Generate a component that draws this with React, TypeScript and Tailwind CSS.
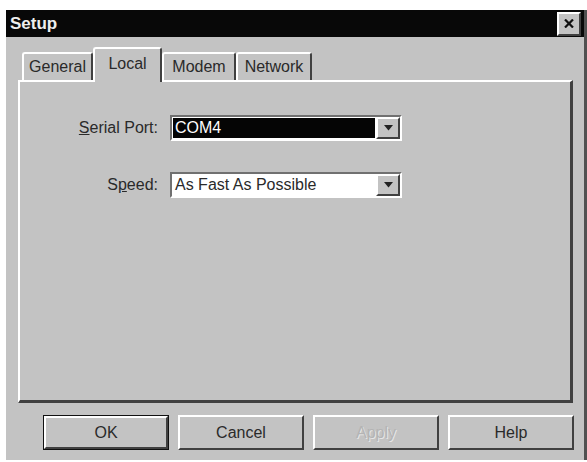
import React from "react";

const raised =
  "border-t-2 border-l-2 border-t-white border-l-white border-r-2 border-b-2 border-r-[#404040] border-b-[#404040]";

function Tab({ label, width, active }: { label: string; width: number; active?: boolean }) {
  return (
    <div
      className={
        active
          ? "relative z-10 -mb-[2px] flex h-[35px] items-start justify-center rounded-t-[3px] border-t-2 border-l-2 border-r-2 border-t-white border-l-white border-r-[#404040] bg-[#c3c3c3] pt-[6px]"
          : "mt-[5px] flex h-[28px] items-start justify-center rounded-t-[3px] border-t-2 border-l-2 border-r-2 border-t-white border-l-white border-r-[#404040] bg-[#c3c3c3] pt-[4px]"
      }
      style={{ width }}
    >
      <span className="leading-[18px]">{label}</span>
    </div>
  );
}

function Combo({ value, selected }: { value: string; selected?: boolean }) {
  return (
    <div className="flex h-[26px] w-[232px] border-t-2 border-l-2 border-t-[#707070] border-l-[#707070] border-r-2 border-b-2 border-r-white border-b-white bg-white">
      <div className="flex flex-1 items-center p-[1px]">
        <div
          className={
            selected
              ? "flex h-full w-full items-center bg-[#050505] pl-[2px] text-white"
              : "flex h-full w-full items-center pl-[2px] text-[#2a2a2a]"
          }
        >
          {value}
        </div>
      </div>
      <div className={"flex w-[24px] items-center justify-center bg-[#c3c3c3] " + raised}>
        <svg width="9" height="6" viewBox="0 0 9 6">
          <path d="M0 0h9L4.5 5.5z" fill="#222" />
        </svg>
      </div>
    </div>
  );
}

function Btn({ label, def, disabled }: { label: string; def?: boolean; disabled?: boolean }) {
  return (
    <div className={"h-[35px] w-[126px] " + (def ? "border border-[#111]" : "")}>
      <div className={"flex h-full w-full items-center justify-center bg-[#c3c3c3] " + raised}>
        <span
          className={disabled ? "text-[#b4b4b4]" : "text-[#2a2a2a]"}
          style={disabled ? { textShadow: "1px 1px 0 #e6e6e6" } : undefined}
        >
          {label}
        </span>
      </div>
    </div>
  );
}

export default function App() {
  return (
    <div
      className="h-[462px] w-[587px] overflow-hidden bg-white text-[16px] text-[#2a2a2a]"
      style={{ fontFamily: '"Liberation Sans", Arial, sans-serif' }}
    >
      <div className="ml-[6px] mt-[10px] flex h-[450px] w-[581px] flex-col border-r-[3px] border-[#505050] bg-[#c3c3c3]">
        <div className="flex h-[27px] items-center justify-between bg-[#080808] pl-[4px] pr-[3px]">
          <span className="text-[17px] font-bold text-[#eeeeee]">Setup</span>
          <div className={"flex h-[24px] w-[24px] items-center justify-center bg-[#c3c3c3] " + raised}>
            <svg width="10" height="9" viewBox="0 0 10 9">
              <path d="M1 0.5l8 8M9 0.5l-8 8" stroke="#111" strokeWidth="2.2" />
            </svg>
          </div>
        </div>

        <div className="pl-[12px] pt-[10px]">
          <div className="flex pl-[4px]">
            <Tab label="General" width={71} />
            <Tab label="Local" width={69} active />
            <Tab label="Modem" width={74} />
            <Tab label="Network" width={76} />
          </div>
          <div className="h-[323px] w-[555px] border-t-2 border-l-2 border-t-white border-l-white border-r-[3px] border-b-[3px] border-r-[#404040] border-b-[#404040] bg-[#c3c3c3]">
            <div className="grid grid-cols-[138px_232px] items-center gap-x-[12px] gap-y-[31px] pt-[33px]">
              <span className="text-right">
                <span className="underline">S</span>erial Port:
              </span>
              <Combo value="COM4" selected />
              <span className="text-right">
                S<span className="underline">p</span>eed:
              </span>
              <Combo value="As Fast As Possible" />
            </div>
          </div>
        </div>

        <div className="mt-[12px] flex gap-[9px] pl-[37px]">
          <Btn label="OK" def />
          <Btn label="Cancel" />
          <Btn label="Apply" disabled />
          <Btn label="Help" />
        </div>
      </div>
    </div>
  );
}
